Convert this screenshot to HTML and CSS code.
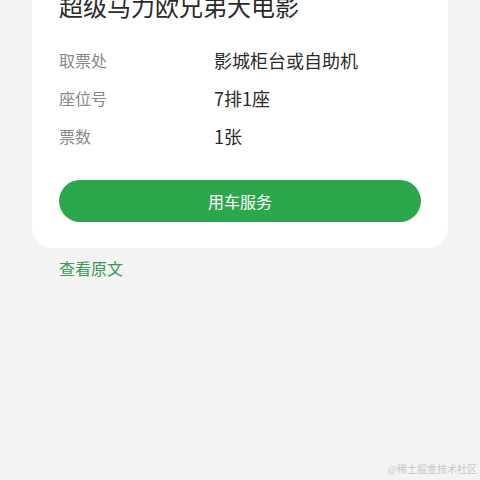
FILE: index.html
```html
<!DOCTYPE html>
<html lang="zh-CN">
<head>
  <meta charset="UTF-8">
  <title>电影票详情</title>
  <meta name="viewport" content="width=device-width, initial-scale=1.0">
  <link rel="stylesheet" href="styles.css">
</head>
<body>
  <div class="page">
    <div class="card">
      <h2 class="title">超级马力欧兄弟大电影</h2>
      <div class="row">
        <span class="label">取票处</span>
        <span class="value">影城柜台或自助机</span>
      </div>
      <div class="row">
        <span class="label">座位号</span>
        <span class="value">7排1座</span>
      </div>
      <div class="row">
        <span class="label">票数</span>
        <span class="value">1张</span>
      </div>
      <button class="btn">用车服务</button>
    </div>
    <a class="link" href="#">查看原文</a>
  </div>
  <div class="watermark">@稀土掘金技术社区</div>
</body>
</html>
```

FILE: styles.css
```css
html, body {
  height: 100%;
}
body {
  margin: 0;
  background-color: #f3f3f3;
  font-family: "Noto Sans CJK SC", "Noto Sans", sans-serif;
  color: #333;
  overflow: hidden;
  position: relative;
}
.page {
  padding: 0 32px;
}
.card {
  background: #fff;
  border-radius: 20px;
  margin-top: -30px;
  padding: 20px 27px 26px;
}
.title {
  margin: 0 0 19px;
  font-size: 24px;
  font-weight: normal;
  line-height: 32px;
  color: #2a2a2a;
}
.row {
  display: flex;
  align-items: center;
  height: 38px;
}
.label {
  width: 155px;
  font-size: 16px;
  color: #888;
}
.value {
  font-size: 18px;
  color: #2a2a2a;
}
.btn {
  display: block;
  width: 100%;
  height: 42px;
  margin-top: 25px;
  border: none;
  border-radius: 21px;
  background-color: #2ca84c;
  color: #fff;
  font-family: inherit;
  font-size: 16px;
}
.link {
  display: inline-block;
  margin: 8px 0 0 27px;
  line-height: 24px;
  font-size: 16px;
  color: #3a9a58;
  text-decoration: none;
}
.watermark {
  position: absolute;
  right: 3px;
  bottom: 4px;
  font-family: "Liberation Serif", "Noto Sans CJK SC", serif;
  font-size: 10px;
  color: #c8c8c8;
}
```
